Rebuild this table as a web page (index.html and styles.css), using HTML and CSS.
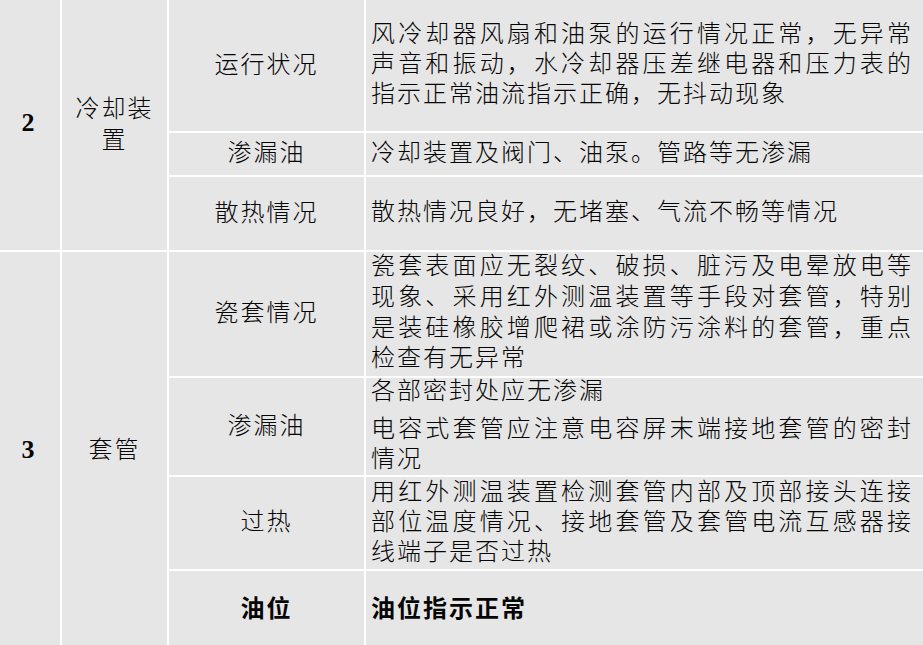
FILE: index.html
```html
<!DOCTYPE html>
<html lang="zh-CN">
<head>
<meta charset="utf-8">
<title>变压器巡视检查</title>
<link rel="stylesheet" href="styles.css">
</head>
<body>
<div class="sheet">
  <div class="grid">
    <div class="cell num g2">2</div>
    <div class="cell name g2"><span class="name-text">冷却装置</span></div>

    <div class="cell item r1">运行状况</div>
    <div class="cell desc r1"><p>风冷却器风扇和油泵的运行情况正常，无异常声音和振动，水冷却器压差继电器和压力表的指示正常油流指示正确，无抖动现象</p></div>

    <div class="cell item r2">渗漏油</div>
    <div class="cell desc r2"><p>冷却装置及阀门、油泵。管路等无渗漏</p></div>

    <div class="cell item r3">散热情况</div>
    <div class="cell desc r3"><p>散热情况良好，无堵塞、气流不畅等情况</p></div>

    <div class="cell num g3">3</div>
    <div class="cell name g3"><span class="name-text">套管</span></div>

    <div class="cell item r4">瓷套情况</div>
    <div class="cell desc r4"><p class="tall">瓷套表面应无裂纹、破损、脏污及电晕放电等现象、采用红外测温装置等手段对套管，特别是装硅橡胶增爬裙或涂防污涂料的套管，重点检查有无异常</p></div>

    <div class="cell item r5">渗漏油</div>
    <div class="cell desc r5"><div><p>各部密封处应无渗漏</p><p class="next">电容式套管应注意电容屏末端接地套管的密封情况</p></div></div>

    <div class="cell item r6">过热</div>
    <div class="cell desc r6"><p>用红外测温装置检测套管内部及顶部接头连接部位温度情况、接地套管及套管电流互感器接线端子是否过热</p></div>

    <div class="cell item r7 bold">油位</div>
    <div class="cell desc r7 bold"><p>油位指示正常</p></div>
  </div>
</div>
</body>
</html>
```
FILE: styles.css
```css
html, body {
  margin: 0;
  padding: 0;
  background: #ffffff;
  overflow: hidden;
}

.sheet {
  width: 940px;
  height: 645px;
  overflow: hidden;
}

.grid {
  display: grid;
  grid-template-columns: 60px 105px 195px 1fr;
  grid-template-rows: 131px 42px 73px 124px 97px 92px 78px;
  gap: 2px;
  background: #ffffff;
  width: 940px;
  font-family: "Noto Sans CJK SC", "Noto Sans", sans-serif;
  font-size: 24px;
  font-weight: 300;
  letter-spacing: 2px;
  color: #050505;
}

.cell {
  background: #e6e6e6;
  display: flex;
  align-items: center;
  padding-bottom: 7px;
}

.num {
  grid-column: 1;
  justify-content: center;
  font-family: "Liberation Serif", serif;
  font-weight: bold;
  font-size: 26px;
  letter-spacing: 0;
  padding-right: 4px;
  padding-bottom: 5px;
}

.g3.num {
  padding-bottom: 2px;
}

.name {
  grid-column: 2;
  justify-content: center;
  padding-left: 8px;
  padding-right: 8px;
  text-align: center;
  line-height: 31px;
}

.g2 { grid-row: 1 / span 3; }
.g3 { grid-row: 4 / span 4; }

.item {
  grid-column: 3;
  justify-content: center;
  text-align: center;
}

.desc {
  grid-column: 4;
  padding-left: 5px;
}

.desc p {
  margin: 0;
  width: 542px;
  line-height: 30px;
  text-align: justify;
}

.desc p.tall {
  line-height: 30.7px;
}

.desc p.next {
  margin-top: 8px;
}

.r1 { grid-row: 1; }
.r2 { grid-row: 2; }
.r3 { grid-row: 3; }
.r4 { grid-row: 4; }
.r5 { grid-row: 5; }
.r6 { grid-row: 6; }
.r7 { grid-row: 7; }

.bold {
  font-weight: bold;
}
```
